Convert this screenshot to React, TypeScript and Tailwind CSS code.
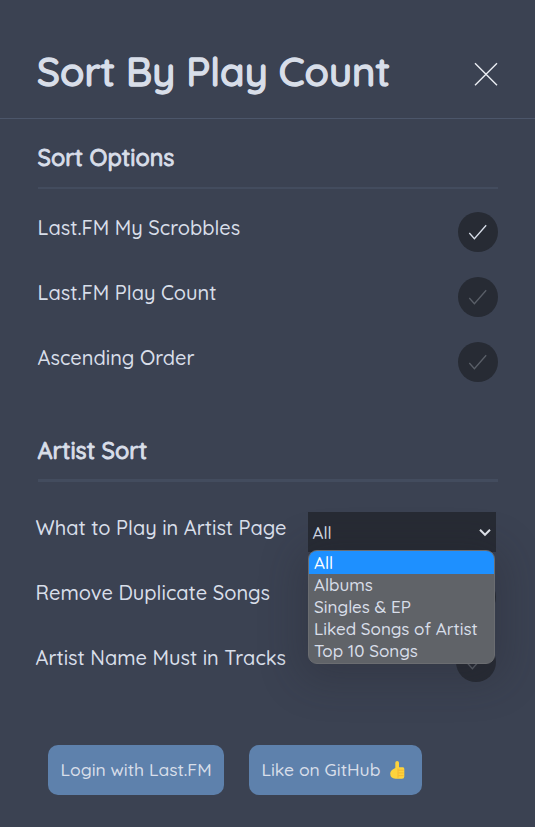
import React from "react";

function Check({ on = false }: { on?: boolean }) {
  return (
    <span className="flex size-10 items-center justify-center rounded-full bg-[#272b34]">
      <svg width="40" height="40" viewBox="0 0 40 40" fill="none" stroke={on ? "#d8dee9" : "#5a5f68"} strokeWidth="1.3">
        <path d="M11.3 21 L16.4 26.7 L28.2 13.3" />
      </svg>
    </span>
  );
}

function Row({ label, children }: { label: string; children: React.ReactNode }) {
  return (
    <div className="flex h-10 items-start justify-between">
      <span className="whitespace-nowrap text-[20px] leading-8">{label}</span>
      {children}
    </div>
  );
}

const options = ["Albums", "Singles & EP", "Liked Songs of Artist", "Top 10 Songs"];

export default function App() {
  return (
    <div className="h-[827px] w-[535px] overflow-hidden bg-[#3b4252] font-['Quicksand','Lato',sans-serif] font-medium text-[#d8dee9]">
      <header className="flex h-[119px] items-start justify-between border-b border-[#4c566a] pl-[37px] pr-[37px] pt-[45px]">
        <h1 className="whitespace-nowrap text-[40px] font-medium leading-[52px] tracking-[0.03px] [-webkit-text-stroke:1.4px_#d8dee9]">Sort By Play Count</h1>
        <svg className="mt-[17px]" width="24" height="24" viewBox="0 0 24 24" stroke="#eceff4" strokeWidth="1.4">
          <path d="M1 1.3 L23 23.3 M23 1.3 L1 23.3" />
        </svg>
      </header>

      <section className="px-[37px]">
        <h2 className="ml-px flex h-[70px] items-start border-b-2 border-[#434c5e] pt-[23px] text-[23.4px] font-medium leading-8 [-webkit-text-stroke:0.9px_#d8dee9]">
          <span className="-ml-[0.5px]">Sort Options</span>
        </h2>
        <div className="mt-[23px] flex flex-col gap-[25px] pl-[0.6px]">
          <Row label="Last.FM My Scrobbles"><Check on /></Row>
          <Row label="Last.FM Play Count"><Check /></Row>
          <Row label="Ascending Order"><Check /></Row>
        </div>
      </section>

      <section className="pt-[53px]">
        <h2 className="ml-[38px] mr-[37px] flex h-[47px] items-start border-b-3 border-[#434c5e] text-[23.4px] font-medium leading-8 [-webkit-text-stroke:0.9px_#d8dee9]">
          <span className="-ml-[0.5px]">Artist Sort</span>
        </h2>
        <div className="mt-[30px] flex flex-col gap-[25px] pl-[35.5px] pr-[39px]">
          <Row label="What to Play in Artist Page">
            <div className="relative flex h-10 w-[188px] items-center justify-between bg-[#272b34] pl-[4.5px] pr-[5px] text-[17px]">
              <span className="pt-[2px]">All</span>
              <svg width="12" height="12" viewBox="0 0 12 12" fill="none" stroke="#e5e9f0" strokeWidth="2">
                <path d="M1 3.8 L6 8.8 L11 3.8" />
              </svg>
              <ul className="absolute left-0 top-[38px] z-10 w-[187px] overflow-hidden rounded-[9px] border border-[#6b6d71] bg-[#606368] pb-[0.5px] text-[17px] leading-[22px] shadow-[0_8px_40px_8px_rgba(35,38,46,0.3)]">
                <li className="h-[23px] bg-[#1e90ff] pl-[5px] leading-[24px] text-white">All</li>
                {options.map((name) => (
                  <li key={name} className="h-[22px] whitespace-nowrap pl-[5px]">{name}</li>
                ))}
              </ul>
            </div>
          </Row>
          <Row label="Remove Duplicate Songs"><Check /></Row>
          <Row label="Artist Name Must in Tracks"><Check /></Row>
        </div>
      </section>

      <footer className="mt-[63px] flex gap-[25px] pl-[48px] text-[17.5px]">
        <button className="h-[50px] w-[176px] whitespace-nowrap rounded-[10px] bg-[#5e81ac] pb-[2px] pl-[12.5px] text-left">Login with Last.FM</button>
        <button className="flex h-[50px] w-[173px] items-center whitespace-nowrap rounded-[10px] bg-[#5e81ac] pl-[12.5px]">
          <span className="w-[127.5px] pb-[2px] text-left">Like on GitHub</span>
          <svg width="16" height="20" viewBox="0 0 16 20">
            <path d="M6.3 8 V2.8 Q6.3 1 8.2 1 Q10 1 10 2.8 V7.2 H14 Q15.3 7.2 15.3 9 V16.5 Q15.3 18.7 13 18.7 H6.5 Q1.2 18.3 1.2 13.6 Q1.2 10.2 6.3 8Z" fill="#fdd33c" />
            <path d="M9 8.5 V17.8 M9.5 10.2 H14.6 M9.5 12.9 H14.6 M9.5 15.6 H14.6" stroke="#f4b02e" strokeWidth="0.8" />
          </svg>
        </button>
      </footer>
    </div>
  );
}
